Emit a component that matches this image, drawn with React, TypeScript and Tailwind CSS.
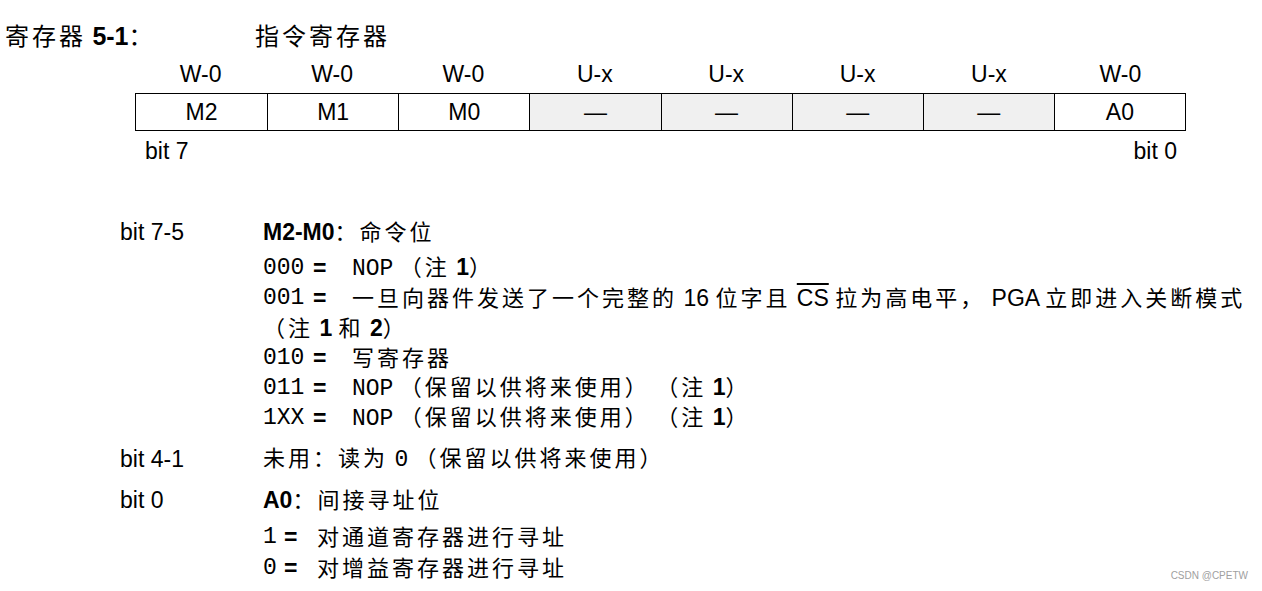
import type { ReactNode } from "react";

const SANS = "font-['Liberation_Sans','Noto_Sans_CJK_SC',sans-serif]";
const MONO = "font-['Liberation_Mono','Noto_Sans_CJK_SC',monospace]";

const headers = ["W-0", "W-0", "W-0", "U-x", "U-x", "U-x", "U-x", "W-0"];
const cells = ["M2", "M1", "M0", "—", "—", "—", "—", "A0"];

// CJK runs get a bit of extra spacing, like the datasheet's Song face
const Zh = ({ children }: { children: ReactNode }) => (
  <span className="text-[22px] tracking-[3px]">{children}</span>
);

const Line = ({ children, className = "" }: { children: ReactNode; className?: string }) => (
  <div className={`flex h-[30px] items-center whitespace-nowrap ${className}`}>{children}</div>
);

const Code = ({ code, short = false }: { code: string; short?: boolean }) => (
  <>
    <span className={`${MONO} text-[23px] ${short ? "w-[21px]" : "w-[50px]"}`}>{code}</span>
    <span className={`font-bold ${short ? "w-[33px]" : "w-[39px]"}`}>=</span>
  </>
);

const Mono = ({ children }: { children: ReactNode }) => (
  <span className={`${MONO} text-[23px]`}>{children}</span>
);

const App = () => {
  return (
    <div className={`relative h-[591px] w-full overflow-hidden bg-white pt-[22px] text-[23px] text-black ${SANS}`}>
      {/* title */}
      <div className="flex h-[30px] items-center pl-[5px]">
        <span className="w-[250px]">
          <span className="text-[24px] tracking-[3px]">寄存器</span> <b className="text-[25px]">5-1</b>
          <span className="text-[24px]">：</span>
        </span>
        <span className="text-[24px] tracking-[3px]">指令寄存器</span>
      </div>

      {/* register table */}
      <div className="ml-[135px] mt-[5px] grid h-[30px] w-[1051px] grid-cols-8 items-center text-center">
        {headers.map((h, i) => (
          <span key={i}>{h}</span>
        ))}
      </div>
      <div className="ml-[135px] mt-[6px] grid w-[1051px] grid-cols-8 border border-black">
        {cells.map((c, i) => (
          <div
            key={i}
            className={`flex h-[36px] items-center justify-center ${i > 0 ? "border-l border-black" : ""} ${
              i >= 3 && i <= 6 ? "bg-[#f0f0f0]" : "bg-white"
            }`}
          >
            {c}
          </div>
        ))}
      </div>
      <div className="ml-[135px] mt-[8px] flex h-[24px] w-[1051px] items-center justify-between pl-[10px] pr-[9px]">
        <span>bit 7</span>
        <span>bit 0</span>
      </div>

      {/* bit descriptions */}
      <div className="mt-[54px] pl-[120px]">
        <div className="flex">
          <div className="flex h-[30px] w-[143px] items-center">bit 7-5</div>
          <div>
            <Line>
              <span>
                <b>M2-M0</b>
                <Zh>：命令位</Zh>
              </span>
            </Line>
            <Line className="mt-[6px]">
              <Code code="000" />
              <span>
                <Mono>NOP</Mono> <Zh>（注</Zh> <b>1</b>
                <Zh>）</Zh>
              </span>
            </Line>
            <Line>
              <Code code="001" />
              <span>
                <Zh>一旦向器件发送了一个完整的</Zh> 16 <Zh>位字且</Zh> <span className="overline">CS</span>{" "}
                <Zh>拉为高电平，</Zh> PGA <Zh>立即进入关断模式</Zh>
              </span>
            </Line>
            <Line>
              <span>
                <Zh>（注</Zh> <b>1</b> <Zh>和</Zh> <b>2</b>
                <Zh>）</Zh>
              </span>
            </Line>
            <Line>
              <Code code="010" />
              <span>
                <Zh>写寄存器</Zh>
              </span>
            </Line>
            <Line>
              <Code code="011" />
              <span>
                <Mono>NOP</Mono> <Zh>（保留以供将来使用）</Zh> <Zh>（注</Zh> <b>1</b>
                <Zh>）</Zh>
              </span>
            </Line>
            <Line>
              <Code code="1XX" />
              <span>
                <Mono>NOP</Mono> <Zh>（保留以供将来使用）</Zh> <Zh>（注</Zh> <b>1</b>
                <Zh>）</Zh>
              </span>
            </Line>
          </div>
        </div>

        <div className="mt-[11px] flex">
          <div className="flex h-[30px] w-[143px] items-center">bit 4-1</div>
          <Line>
            <span>
              <Zh>未用：读为</Zh> <Mono>0</Mono> <Zh>（保留以供将来使用）</Zh>
            </span>
          </Line>
        </div>

        <div className="mt-[11px] flex">
          <div className="flex h-[30px] w-[143px] items-center">bit 0</div>
          <div>
            <Line>
              <span>
                <b>A0</b>
                <Zh>：间接寻址位</Zh>
              </span>
            </Line>
            <Line className="mt-[7px]">
              <Code code="1" short />
              <span>
                <Zh>对通道寄存器进行寻址</Zh>
              </span>
            </Line>
            <Line className="mt-[1px]">
              <Code code="0" short />
              <span>
                <Zh>对增益寄存器进行寻址</Zh>
              </span>
            </Line>
          </div>
        </div>
      </div>

      <div className="absolute bottom-[8px] right-[14px] text-[10px] text-[#a0a0a0]">CSDN @CPETW</div>
    </div>
  );
};

export default App;
